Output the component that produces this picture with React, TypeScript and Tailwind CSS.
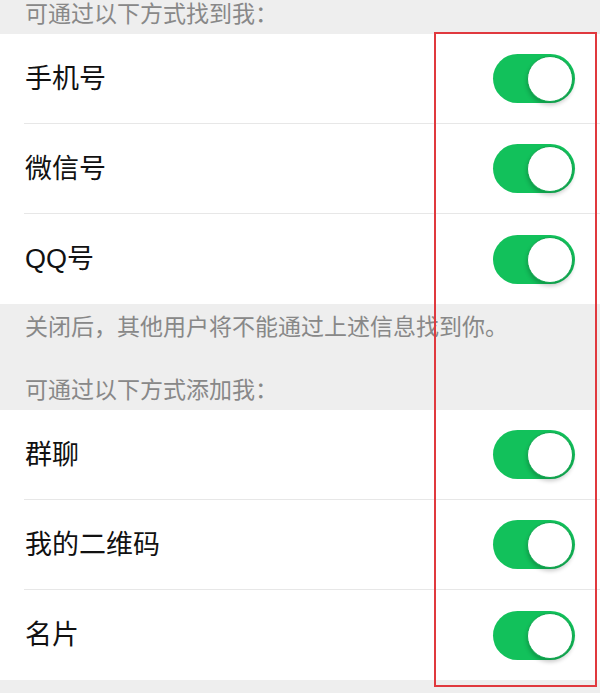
const findMe = ["手机号", "微信号", "QQ号"];
const addMe = ["群聊", "我的二维码", "名片"];

function Toggle() {
  return (
    <div className="relative h-[49px] w-[82px] shrink-0 rounded-full bg-[#12c15b]">
      <div className="absolute right-[2px] top-[2px] h-[46px] w-[46px] rounded-full border border-[#0ea64d] bg-white shadow-[0_3px_4px_rgba(0,0,0,0.22)]" />
    </div>
  );
}

function Group({ items }: { items: string[] }) {
  return (
    <div className="bg-white">
      {items.map((label, i) => (
        <div key={label} className="pl-[24px]">
          <div
            className={
              "flex h-[90px] items-center justify-between pr-[25px] " +
              (i < items.length - 1 ? "border-b border-[#e7e7e7]" : "h-[89px]")
            }
          >
            <span className="pl-[1px] text-[27px] leading-[30px] text-[#111]">{label}</span>
            <Toggle />
          </div>
        </div>
      ))}
    </div>
  );
}

export default function App() {
  return (
    <div
      className="relative h-[693px] w-[600px] overflow-hidden bg-[#eeeeee]"
      style={{ fontFamily: '"Liberation Sans", "Noto Sans CJK SC", sans-serif' }}
    >
      <div className="flex h-[34px] items-start px-[25px] pt-[3px] text-[23px] leading-[23px] text-[#888888]">
        可通过以下方式找到我：
      </div>
      <Group items={findMe} />
      <div className="flex h-[106px] flex-col justify-between px-[25px] pb-[8px] pt-[12px] text-[23px] leading-[23px] text-[#888888]">
        <p>关闭后，其他用户将不能通过上述信息找到你。</p>
        <p>可通过以下方式添加我：</p>
      </div>
      <Group items={addMe} />
      <div className="pointer-events-none absolute left-[434px] top-[32px] h-[655px] w-[163px] border-2 border-[#e0393e]" />
    </div>
  );
}
